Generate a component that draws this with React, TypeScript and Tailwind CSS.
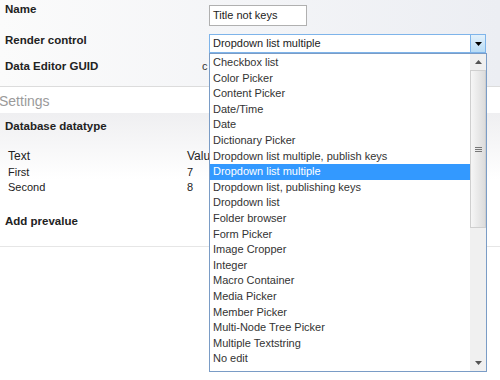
import React from "react";

const items = [
  "Checkbox list",
  "Color Picker",
  "Content Picker",
  "Date/Time",
  "Date",
  "Dictionary Picker",
  "Dropdown list multiple, publish keys",
  "Dropdown list multiple",
  "Dropdown list, publishing keys",
  "Dropdown list",
  "Folder browser",
  "Form Picker",
  "Image Cropper",
  "Integer",
  "Macro Container",
  "Media Picker",
  "Member Picker",
  "Multi-Node Tree Picker",
  "Multiple Textstring",
  "No edit",
];

export default function App() {
  return (
    <div
      className="relative w-[500px] h-[380px] overflow-hidden bg-white text-[#222]"
      style={{ fontFamily: '"Liberation Sans", Arial, sans-serif' }}
    >
      {/* Top section */}
      <div className="h-[87px] bg-gradient-to-r from-[#fbfbfb] to-[#eceef3] border-b border-[#dcdcdc] pl-[5px] flex flex-col">
        <div className="h-[31px] flex items-start">
          <div className="w-[204px] pt-[1px] text-[11.5px] font-bold">Name</div>
          <div className="mt-[5px] w-[98px] h-[21px] border border-[#b0b0b0] bg-white text-[11px] flex items-center px-[3px]">
            Title not keys
          </div>
        </div>
        <div className="h-[27px] flex items-start">
          <div className="w-[204px] pt-[1px] text-[11.5px] font-bold">Render control</div>
        </div>
        <div className="h-[20px] flex items-start">
          <div className="w-[197px] text-[11.5px] font-bold">Data Editor GUID</div>
          <div className="text-[11px] text-[#333]">c</div>
        </div>
      </div>
      {/* Settings */}
      <div className="h-[26px] bg-white flex items-center -ml-[1px] pt-[2px]">
        <span className="text-[14px] text-[#9a9a9a]">Settings</span>
      </div>
      {/* Database section */}
      <div className="h-[134px] bg-gradient-to-b from-[#efeff1] via-white to-white border-b border-[#e6e6e6] pl-[5px] pt-[5px]">
        <div className="text-[11.5px] font-bold h-[22px]">Database datatype</div>
        <div className="pl-[3px] pt-[9px] text-[11px] leading-[15.5px] grid grid-cols-[179px_1fr]">
          <span className="text-[12px]">Text</span>
          <span className="text-[12px]">Value</span>
          <span>First</span>
          <span>7</span>
          <span>Second</span>
          <span>8</span>
        </div>
        <div className="mt-[17px] text-[11.5px] font-bold">Add prevalue</div>
      </div>

      {/* Select box */}
      <div className="absolute left-[209px] top-[34px] w-[277px] h-[19px] border border-[#7eb4ea] bg-white flex">
        <div className="flex-1 text-[11px] flex items-center pl-[3px] text-[#222]">Dropdown list multiple</div>
        <div className="w-[15px] h-full bg-gradient-to-b from-[#e3f1fb] to-[#b9dcf5] border-l border-[#7eb4ea] flex items-center justify-center">
          <svg width="7" height="4" viewBox="0 0 7 4">
            <path d="M0 0H7L3.5 4Z" fill="#000" />
          </svg>
        </div>
      </div>

      {/* Dropdown list */}
      <div className="absolute left-[209px] top-[53px] w-[278px] h-[319px] border border-[#7a9cc6] bg-white flex">
        <div className="flex-1 pt-[1px] text-[11px] text-[#333]">
          {items.map((it, i) => (
            <div
              key={it}
              className={
                "h-[15.6px] leading-[15.6px] pl-[3px] whitespace-nowrap " +
                (i === 7 ? "bg-[#3399ff] text-white" : "")
              }
            >
              {it}
            </div>
          ))}
        </div>
        <div className="w-[16px] h-full bg-[#f0f0f0] flex flex-col">
          <div className="h-[16px] flex items-center justify-center">
            <svg width="7" height="4" viewBox="0 0 7 4">
              <path d="M0 4H7L3.5 0Z" fill="#555" />
            </svg>
          </div>
          <div className="h-[158px] border border-[#cfcfcf] bg-gradient-to-r from-[#f6f6f6] to-[#dcdcdc] flex items-center justify-center">
            <svg width="7" height="7" viewBox="0 0 7 7">
              <path d="M0 1.5H7M0 3.5H7M0 5.5H7" stroke="#777" strokeWidth="1" />
            </svg>
          </div>
          <div className="flex-1" />
          <div className="h-[16px] flex items-center justify-center">
            <svg width="7" height="4" viewBox="0 0 7 4">
              <path d="M0 0H7L3.5 4Z" fill="#555" />
            </svg>
          </div>
        </div>
      </div>
    </div>
  );
}
